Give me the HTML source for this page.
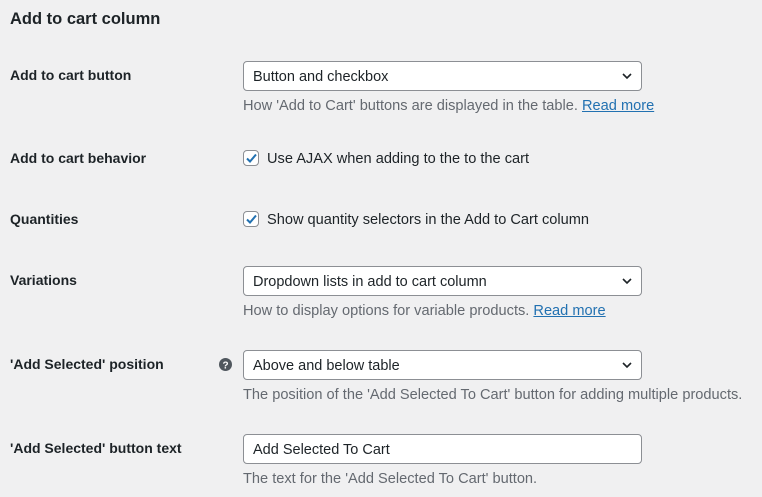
<!DOCTYPE html>
<html><head><style>
body{margin:0;width:762px;height:497px;background:#f0f0f1;font-family:"Liberation Sans",sans-serif;color:#1d2327;position:relative;overflow:hidden}
.a{position:absolute;white-space:nowrap}
h2{position:absolute;left:10px;top:10px;margin:0;font-size:16.5px;font-weight:600}
.l{left:10px;font-size:14px;font-weight:bold;line-height:20px}
.box{position:absolute;left:243px;width:397px;height:28px;background:#fff;border:1px solid #8c8f94;border-radius:4px;font-size:14.5px;line-height:30px;box-sizing:content-box}
.box span{position:absolute;left:9px}
.box svg{position:absolute;right:8px;top:9px}
.d{left:243px;font-size:14.6px;color:#646970;line-height:20px}
.d a{color:#2271b1;text-decoration:underline}
.cb{position:absolute;left:243px;width:14px;height:14px;border:1px solid #8c8f94;border-radius:4px;background:#fff}
.cb svg{position:absolute;left:1px;top:1px}
.t{left:267px;font-size:14.6px;line-height:20px}
</style></head><body>
<h2>Add to cart column</h2>
<div class="a l" style="top:65px">Add to cart button</div>
<div class="box" style="top:61px"><span>Button and checkbox</span><svg width="12" height="10" viewBox="0 0 12 10"><path d="M2 3l4 4 4-4" fill="none" stroke="#1d2327" stroke-width="1.6"/></svg></div>
<div class="a d" style="top:96px">How 'Add to Cart' buttons are displayed in the table. <a>Read more</a></div>

<div class="a l" style="top:148px">Add to cart behavior</div>
<div class="cb" style="top:150px"><svg width="13" height="13" viewBox="0 0 13 13"><path d="M2 6.5l3 3 6-7" fill="none" stroke="#2271b1" stroke-width="2"/></svg></div>
<div class="a t" style="top:149px">Use AJAX when adding to the to the cart</div>

<div class="a l" style="top:209px">Quantities</div>
<div class="cb" style="top:211px"><svg width="13" height="13" viewBox="0 0 13 13"><path d="M2 6.5l3 3 6-7" fill="none" stroke="#2271b1" stroke-width="2"/></svg></div>
<div class="a t" style="top:210px">Show quantity selectors in the Add to Cart column</div>

<div class="a l" style="top:270px">Variations</div>
<div class="box" style="top:266px"><span>Dropdown lists in add to cart column</span><svg width="12" height="10" viewBox="0 0 12 10"><path d="M2 3l4 4 4-4" fill="none" stroke="#1d2327" stroke-width="1.6"/></svg></div>
<div class="a d" style="top:301px">How to display options for variable products. <a>Read more</a></div>

<div class="a l" style="top:354px">'Add Selected' position</div>
<svg class="a" style="left:219px;top:358px" width="13" height="13" viewBox="0 0 13 13"><circle cx="6.5" cy="6.5" r="6.5" fill="#50575e"/><text x="6.5" y="10.5" font-size="10" font-weight="bold" fill="#fff" text-anchor="middle" font-family="Liberation Sans">?</text></svg>
<div class="box" style="top:350px"><span>Above and below table</span><svg width="12" height="10" viewBox="0 0 12 10"><path d="M2 3l4 4 4-4" fill="none" stroke="#1d2327" stroke-width="1.6"/></svg></div>
<div class="a d" style="top:385px">The position of the 'Add Selected To Cart' button for adding multiple products.</div>

<div class="a l" style="top:438px">'Add Selected' button text</div>
<div class="box" style="top:434px"><span>Add Selected To Cart</span></div>
<div class="a d" style="top:469px">The text for the 'Add Selected To Cart' button.</div>
</body></html>
